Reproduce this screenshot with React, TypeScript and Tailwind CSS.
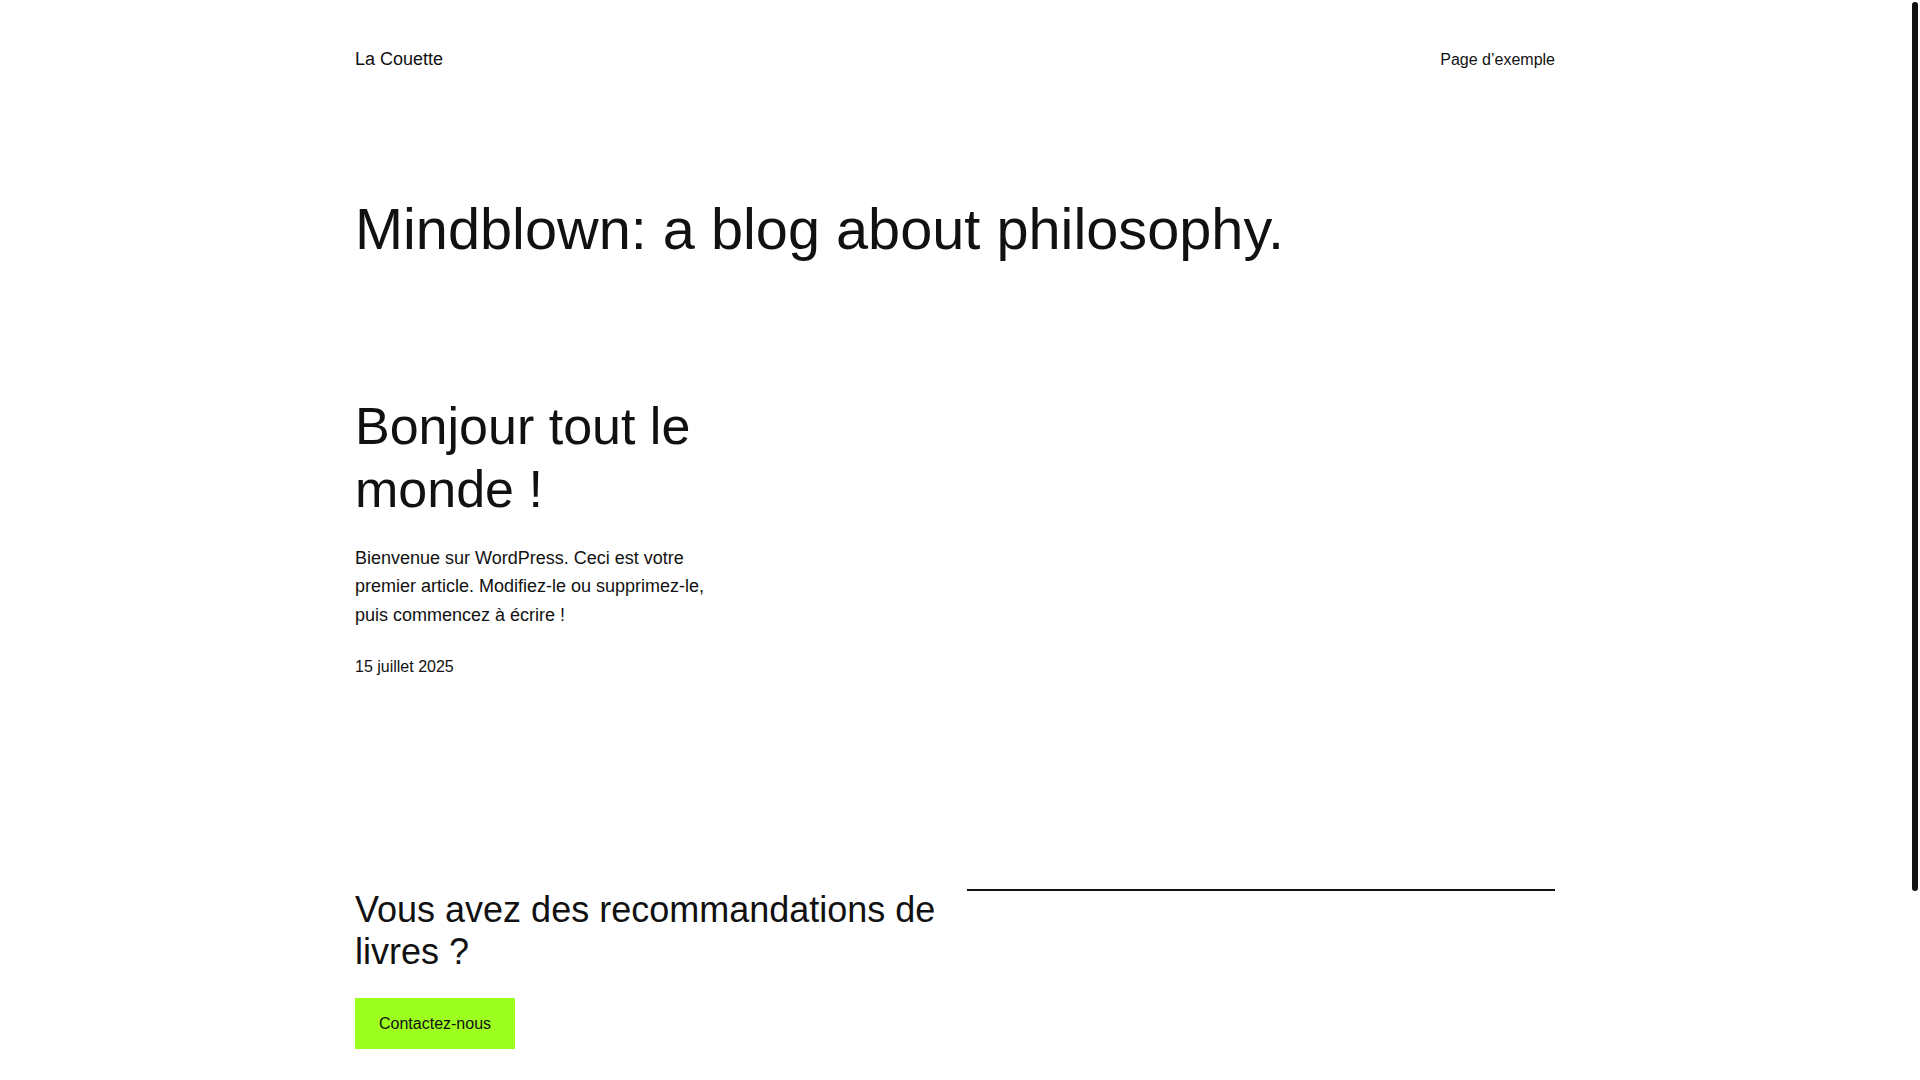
import React from 'react';

type Post = {
  id: number;
  title: string;
  excerpt: string;
  date: string;
};

const posts: Post[] = [
  {
    id: 1,
    title: 'Bonjour tout le monde !',
    excerpt:
      'Bienvenue sur WordPress. Ceci est votre premier article. Modifiez-le ou supprimez-le, puis commencez à écrire !',
    date: '15 juillet 2025',
  },
];

export default function App() {
  return (
    <div className="flex h-screen bg-white text-[#111111] [font-family:'Liberation_Sans',Arial,sans-serif]">
      {/* Zone de contenu */}
      <div className="flex-1 overflow-hidden">
        <div className="mx-auto w-[1200px] pb-[257px]">
          {/* En-tête */}
          <header className="flex h-[27px] items-center justify-between mt-[46px]">
            <a href="#" className="text-[18px] leading-[27px]">
              La Couette
            </a>
            <nav>
              <a href="#" className="text-[16px] leading-[24px]">
                Page d’exemple
              </a>
            </nav>
          </header>

          <h1 className="mt-[122px] text-[57.7px] leading-[69px] font-normal">
            Mindblown: a blog about philosophy.
          </h1>

          {/* Articles */}
          <div className="mt-[131px] grid grid-cols-3 gap-6">
            {posts.map((p) => (
              <article key={p.id}>
                <h2 className="text-[52px] leading-[63.3px] font-normal">
                  <a href="#">{p.title}</a>
                </h2>
                <p className="mt-[22px] text-[18px] leading-[1.6]">{p.excerpt}</p>
                <div className="mt-[25px] text-[16px] leading-[24px]">{p.date}</div>
              </article>
            ))}
          </div>

          {/* Appel à l'action */}
          <section className="mt-[210px] grid grid-cols-2 gap-6">
            <div>
              <h2 className="text-[36px] leading-[42px] font-normal">
                Vous avez des recommandations de livres ?
              </h2>
              <a
                href="#"
                className="mt-[25px] inline-block bg-[#9dff20] px-6 py-4 text-[16px] leading-[1.2]"
              >
                Contactez-nous
              </a>
            </div>
            <div>
              <div className="h-[2px] bg-[#111111]" />
            </div>
          </section>
        </div>
      </div>

      {/* Barre de défilement */}
      <div className="w-[10px] shrink-0 bg-white px-[2px] pt-[2px]">
        <div className="h-[889px] rounded-full bg-[#111111]" />
      </div>
    </div>
  );
}
